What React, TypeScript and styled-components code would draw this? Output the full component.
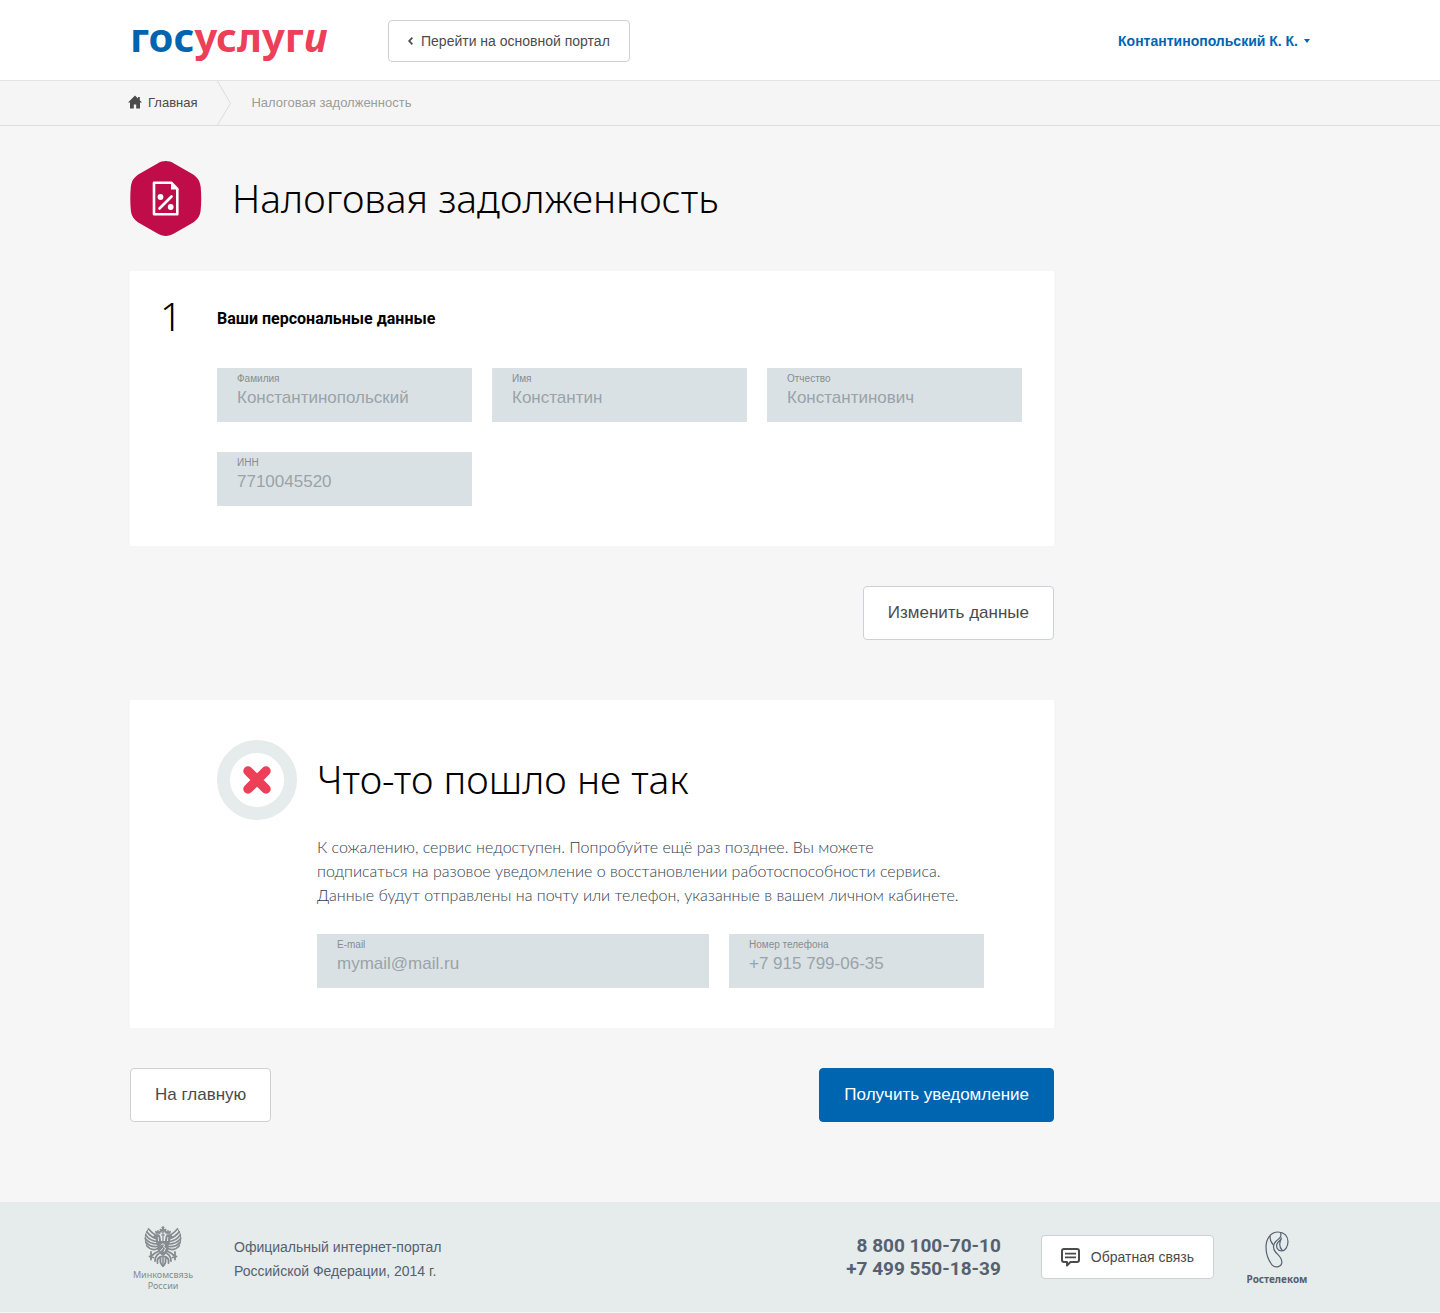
import React, { useId } from "react";
import styled, { createGlobalStyle } from "styled-components";

const color = {
  blue: "#0065b1",
  red: "#ee3f58",
  crimson: "#c00d4a",
  text: "#4b4b4b",
  slate: "#556170",
  page: "#f6f6f6",
  panel: "#e6ebeb",
  field: "#dae1e4",
  line: "#cdd0d4",
};

const sans = `"Liberation Sans", Arial, sans-serif`;
const display = `"Noto Sans", "Open Sans", sans-serif`;
const reading = `Lato, "Noto Sans", sans-serif`;
const strong = `Roboto, "Noto Sans", sans-serif`;

const GlobalStyle = createGlobalStyle`
  *, *::before, *::after { box-sizing: border-box; }
  body {
    margin: 0;
    background: ${color.page};
    color: ${color.text};
    font-family: ${sans};
    font-size: 14px;
  }
  h1, h2, p { margin: 0; }
  a { color: inherit; text-decoration: none; }
  button { cursor: pointer; }
  svg { display: block; flex: none; }
`;

const Page = styled.div`
  display: flex;
  flex-direction: column;
`;

const Container = styled.div`
  width: 100%;
  max-width: 1220px;
  margin: 0 auto;
  padding: 0 20px;
`;

const Header = styled.header`
  background: #fff;
  border-bottom: 1px solid #e3e3e3;
`;

const HeaderRow = styled(Container)`
  display: flex;
  align-items: center;
  height: 80px;
  padding-top: 2px;
`;

const Logo = styled.a`
  align-self: flex-start;
  width: 258px;
  color: ${color.red};
  font: 700 40px/70px ${display};
`;

const LogoStart = styled.span`
  color: ${color.blue};
`;

const Button = styled.button<{ $primary?: boolean; $size?: "small" | "medium" }>`
  display: inline-flex;
  align-items: center;
  gap: ${(p) => (p.$size === "medium" ? 11 : 8)}px;
  height: ${(p) => (p.$size === "small" ? 42 : p.$size === "medium" ? 44 : 54)}px;
  padding: 0 ${(p) => (p.$size ? 19 : 24)}px;
  border: 1px solid ${(p) => (p.$primary ? color.blue : color.line)};
  border-radius: 4px;
  background: ${(p) => (p.$primary ? color.blue : "#fff")};
  color: ${(p) => (p.$primary ? "#fff" : color.text)};
  font: ${(p) => (p.$size ? 14 : 17)}px ${sans};
  white-space: nowrap;
`;

const UserMenu = styled.button`
  display: flex;
  align-items: center;
  gap: 6px;
  margin-left: auto;
  padding: 0;
  border: 0;
  background: none;
  color: ${color.blue};
  font: 700 14px ${sans};
`;

const Crumbs = styled.nav`
  border-bottom: 1px solid #dedede;
  background: #f5f5f5;
`;

const CrumbRow = styled(Container)`
  display: flex;
  align-items: center;
  gap: 20px;
  height: 44px;
  font-size: 13px;
`;

const HomeLink = styled.a`
  display: flex;
  align-items: center;
  gap: 6px;
  margin-left: -2px;
  padding-bottom: 2px;
`;

const Current = styled.span`
  padding-bottom: 2px;
  color: #9c9c9c;
`;

const Main = styled(Container).attrs({ as: "main" })``;

const Column = styled.div`
  max-width: 924px;
`;

const TitleRow = styled.div`
  display: flex;
  align-items: center;
  gap: 30px;
  padding: 35px 0;
`;

const Title = styled.h1`
  padding-bottom: 2px;
  color: #000;
  font: 300 39px/50px ${display};
`;

const Card = styled.section<{ $top: number }>`
  display: grid;
  grid-template-columns: 57px 1fr;
  padding: ${(p) => p.$top}px 32px 40px 30px;
  background: #fff;
`;

const StepNumber = styled.span`
  color: #000;
  font: 300 39px/50px ${display};
`;

const CardBody = styled.div`
  grid-column: 2;
`;

const CardTitle = styled.h2`
  padding-top: 8px;
  margin-bottom: 29px;
  color: #000;
  font: 700 16px/40px ${strong};
`;

const FieldGrid = styled.div`
  display: grid;
  grid-template-columns: repeat(3, 1fr);
  gap: 30px 20px;
`;

const FieldBox = styled.div`
  display: flex;
  flex-direction: column;
  min-width: 0;
  height: 54px;
  padding: 5px 20px 0;
  background: ${color.field};
`;

const FieldLabel = styled.label`
  color: #858d91;
  font-size: 10px;
  line-height: 12px;
`;

const FieldInput = styled.input`
  width: 100%;
  height: 26px;
  padding: 0;
  border: 0;
  outline: 0;
  background: none;
  color: #99a3a9;
  font: 17px ${sans};
`;

const Actions = styled.div<{ $end?: boolean }>`
  display: flex;
  justify-content: ${(p) => (p.$end ? "flex-end" : "space-between")};
  padding: 40px 0 ${(p) => (p.$end ? 60 : 80)}px;
`;

const ErrorHead = styled.div`
  display: flex;
  align-items: center;
  gap: 20px;
`;

const ErrorBody = styled.div`
  padding: 15px 38px 0 100px;
`;

const ErrorText = styled.p`
  margin-bottom: 27px;
  color: #323e4c;
  font: 300 16px/24px ${reading};
  white-space: nowrap;
`;

const ContactGrid = styled.div`
  display: grid;
  grid-template-columns: 392fr 255fr;
  gap: 20px;
`;

const Footer = styled.footer`
  margin-bottom: 1px;
  background: ${color.panel};
`;

const FooterRow = styled(Container)`
  display: flex;
  align-items: center;
  min-height: 110px;
`;

const Partner = styled.a<{ $bold?: boolean }>`
  display: flex;
  flex-direction: column;
  align-items: center;
  gap: ${(p) => (p.$bold ? 3 : 1)}px;
  width: 66px;
  padding-top: 3px;
  color: ${(p) => (p.$bold ? color.slate : "#858b8e")};
  font: ${(p) => (p.$bold ? "700 10px/14px" : "400 9px/11px")} ${display};
  text-align: center;
`;

const Copyright = styled.p`
  margin-left: 38px;
  padding-top: 3px;
  color: ${color.slate};
  line-height: 24px;
`;

const Phones = styled.address`
  display: flex;
  flex-direction: column;
  margin: 0 40px 0 auto;
  color: ${color.slate};
  font: 700 19px/23px ${strong};
  text-align: right;
`;

const Sponsor = styled.div`
  margin-left: 30px;
`;

function Field({ label, value }: { label: string; value: string }) {
  const id = useId();
  return (
    <FieldBox>
      <FieldLabel htmlFor={id}>{label}</FieldLabel>
      <FieldInput id={id} value={value} readOnly />
    </FieldBox>
  );
}

const BackIcon = () => (
  <svg width="5" height="8" viewBox="0 0 5 8" fill="none" stroke="#4b4b4b" strokeWidth="1.8">
    <path d="M4.4.6 1.2 4l3.2 3.4" />
  </svg>
);

const CaretIcon = () => (
  <svg width="6" height="4" viewBox="0 0 6 4">
    <path d="M0 0h6L3 4z" fill={color.blue} />
  </svg>
);

const HomeIcon = () => (
  <svg width="14" height="14" viewBox="0 0 14 14">
    <path d="M7 .5 0 7.500h2V13.500h3.800V9.500h2.400v4H12v-6h2l-2.200-2.200V2H10v1.500z" fill="#4b4b4b" />
  </svg>
);

const CrumbArrow = () => (
  <svg width="14" height="44" viewBox="0 0 14 44" fill="none" stroke="#dcdcdc">
    <path d="M.5 0 13.4 22.5.5 44" />
  </svg>
);

const TaxIcon = () => (
  <svg width="72" height="75" viewBox="0 0 72 75" fill="none">
    <path
      fill={color.crimson}
      d="M27.500 2.400c5.500-3.200 11-3.200 16.500 0l17.500 10c6 3.500 8.600 7.600 9.200 13.600.7 8 .7 15 0 23-.6 6-3.200 10.100-9.200 13.600l-17.500 10c-5.500 3.200-11 3.200-16.500 0l-17.500-10C4 59.100 1.400 55 .8 49c-.7-8-.7-15 0-23 .6-6 3.200-10.100 9.200-13.600z"
    />
    <path d="M24 21.800h17.500l5.800 6v25.400H24z" stroke="#fff" strokeWidth="2.600" strokeLinejoin="round" />
    <path d="M41 20.800l8 7.800h-8z" fill="#fff" />
    <path d="M29.500 47.500 41.500 35.500" stroke="#fff" strokeWidth="2.600" strokeLinecap="round" />
    <circle cx="30.500" cy="36" r="2.900" fill="#fff" />
    <circle cx="40.700" cy="46" r="2.900" fill="#fff" />
  </svg>
);

const ErrorIcon = () => (
  <svg width="80" height="80" viewBox="0 0 80 80" fill="none">
    <circle cx="40" cy="40" r="33.500" stroke={color.panel} strokeWidth="13" />
    <path d="m31 31 18 18m0-18L31 49" stroke={color.red} strokeWidth="9.500" strokeLinecap="round" />
  </svg>
);

const ChatIcon = () => (
  <svg width="19" height="19" viewBox="0 0 19 19" fill="none" stroke="#4b4b4b" strokeWidth="2" strokeLinejoin="round">
    <path d="M3 1h13a2 2 0 0 1 2 2v9a2 2 0 0 1-2 2H9.500L6 17.500V14H3a2 2 0 0 1-2-2V3a2 2 0 0 1 2-2z" />
    <path d="M4 5.700h11M4 9.300h11" strokeWidth="1.700" />
  </svg>
);

const RostelecomIcon = () => (
  <svg width="24" height="38" viewBox="0 0 24 38" fill="none" stroke="#556170" strokeWidth="1.200">
    <path d="M13 1C6 1 1 7.500 1 16c0 8 3 14 6 17.800 3 3.400 9 2.700 9.800-1.800.7-5-3.300-7.500-6.300-11C7.500 17.500 8 13 11 10.200 14 7.500 17 6.500 15.500 1.200" />
    <path d="M13 1c6 0 10 4 10 9.500C23 16 20 20 16.500 20c-4 0-5.800-4-4.300-7.500C13.300 10 16 10 16.500 6.500M5.200 5c-.5 3 .8 6.500 3.200 9M16.500 7.500c-2.500 4-2.200 8.500.8 12" />
  </svg>
);

const feathers = [
  "M13.500 10.500C9.500 8 6.500 5.500 4.500 3",
  "M13 13C8.500 11.500 5 9 2.800 5.800",
  "M13 15.500C8.500 15 4 12.500 1.700 9",
  "M13 18C8.500 18 4 16 1.300 12.500",
  "M13.500 20.500C9 21 4.500 19.500 1.800 16",
  "M14 22.500C10.500 24.500 6 23.500 3 20",
];

const CrestIcon = () => (
  <svg width="38" height="42" viewBox="0 0 38 42" fill="none" stroke="#858b8e" strokeLinecap="round">
    {["", "matrix(-1 0 0 1 38 0)"].map((transform) => (
      <g key={transform} transform={transform || undefined}>
        {feathers.map((d) => (
          <path key={d} d={d} strokeWidth="1.700" />
        ))}
        <path d="M4.500 3C2 6 1.200 9 1.300 13c.2 3.500 1 6 2.200 8" strokeWidth="1" />
        <path d="M17 18c-2-3-.5-6-2-8-1.500-1.500-4-.5-5 1.200l2.500.3c1 1.800-.5 4 1.500 7" strokeWidth="2" />
        <path d="M12 7.500 11.500 5l1.500 1 1-1.800L15 6l1.500-1L16 7.500z" fill="#858b8e" strokeWidth=".8" />
        <path d="M14 25.500c-2.500 1-4.500 2.500-6.500 4.500M7 26v7.500M5.500 30.500l4 1M15 27.500c-2.500 1.500-4 4-4 7.500" strokeWidth="1.800" />
        <path d="M18 30.500c-3.500.5-5.500 3-4.500 6.500M16.500 33c-.5 3 .5 5.500 2.500 7" strokeWidth="1.900" />
      </g>
    ))}
    <path d="M16.500 5.500 16 3l1.700.8L19 2l1.300 1.800L22 3l-.5 2.500z" fill="#858b8e" strokeWidth="1" />
    <path d="M19 .6V3M18 1.400h2M19 6v9M17.500 9h3" strokeWidth="1.200" />
    <path d="M19 31v9" strokeWidth="1.500" />
    <path d="M14 15.500h10v7.500c0 3-2.500 5-5 6.500-2.500-1.500-5-3.500-5-6.500z" fill="#858b8e" strokeWidth="1" />
    <path d="M17 19c1-1.500 3-1.500 3.500 0l-1 2 2 1.500-1.500 3M16.500 25l2-2.500" stroke="#e6ebeb" strokeWidth="1" />
  </svg>
);

export default function App() {
  return (
    <Page>
      <GlobalStyle />
      <Header>
        <HeaderRow>
          <Logo href="#" aria-label="госуслуги">
            <LogoStart>гос</LogoStart>услуг<i>и</i>
          </Logo>
          <Button type="button" $size="small">
            <BackIcon />
            Перейти на основной портал
          </Button>
          <UserMenu type="button" aria-haspopup="menu">
            Контантинопольский К. К.
            <CaretIcon />
          </UserMenu>
        </HeaderRow>
      </Header>

      <Crumbs>
        <CrumbRow>
          <HomeLink href="#">
            <HomeIcon />
            Главная
          </HomeLink>
          <CrumbArrow />
          <Current aria-current="page">Налоговая задолженность</Current>
        </CrumbRow>
      </Crumbs>

      <Main>
        <Column>
          <TitleRow>
            <TaxIcon />
            <Title>Налоговая задолженность</Title>
          </TitleRow>

          <Card $top={20}>
            <StepNumber>1</StepNumber>
            <CardBody>
              <CardTitle>Ваши персональные данные</CardTitle>
              <FieldGrid>
                <Field label="Фамилия" value="Константинопольский" />
                <Field label="Имя" value="Константин" />
                <Field label="Отчество" value="Константинович" />
                <Field label="ИНН" value="7710045520" />
              </FieldGrid>
            </CardBody>
          </Card>
          <Actions $end>
            <Button type="button">Изменить данные</Button>
          </Actions>

          <Card $top={40}>
            <CardBody>
              <ErrorHead>
                <ErrorIcon />
                <Title as="h2">Что-то пошло не так</Title>
              </ErrorHead>
              <ErrorBody>
                <ErrorText>
                  К сожалению, сервис недоступен. Попробуйте ещё раз позднее. Вы можете
                  <br />
                  подписаться на разовое уведомление о восстановлении работоспособности сервиса.
                  <br />
                  Данные будут отправлены на почту или телефон, указанные в вашем личном кабинете.
                </ErrorText>
                <ContactGrid>
                  <Field label="E-mail" value="mymail@mail.ru" />
                  <Field label="Номер телефона" value="+7 915 799-06-35" />
                </ContactGrid>
              </ErrorBody>
            </CardBody>
          </Card>
          <Actions>
            <Button type="button">На главную</Button>
            <Button type="button" $primary>
              Получить уведомление
            </Button>
          </Actions>
        </Column>
      </Main>

      <Footer>
        <FooterRow>
          <Partner href="#">
            <CrestIcon />
            <span>
              Минкомсвязь
              <br />
              России
            </span>
          </Partner>
          <Copyright>
            Официальный интернет-портал
            <br />
            Российской Федерации, 2014 г.
          </Copyright>
          <Phones>
            <a href="tel:88001007010">8 800 100-70-10</a>
            <a href="tel:+74995501839">+7 499 550-18-39</a>
          </Phones>
          <Button type="button" $size="medium">
            <ChatIcon />
            Обратная связь
          </Button>
          <Sponsor>
            <Partner href="#" $bold>
              <RostelecomIcon />
              Ростелеком
            </Partner>
          </Sponsor>
        </FooterRow>
      </Footer>
    </Page>
  );
}
